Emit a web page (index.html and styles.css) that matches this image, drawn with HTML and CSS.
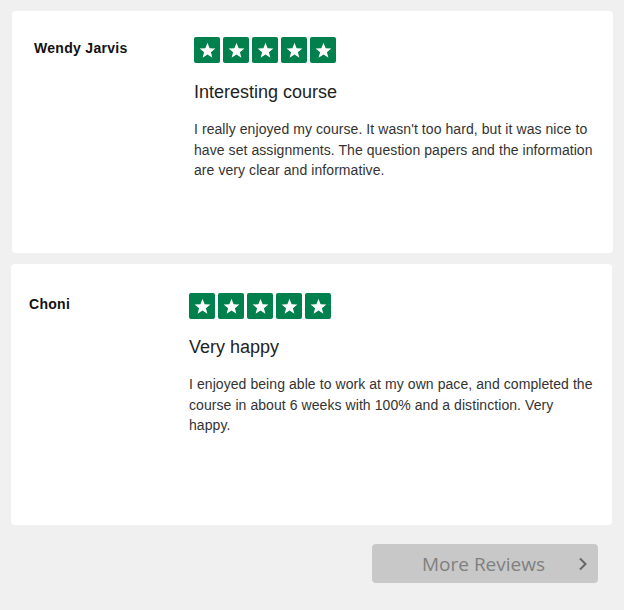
FILE: index.html
```html
<!DOCTYPE html>
<html>
<head>
<meta charset="utf-8">
<link rel="stylesheet" href="styles.css">
</head>
<body>
<div class="page">
  <div class="card card-one">
    <div class="author">Wendy Jarvis</div>
    <div class="content">
      <div class="stars">
        <span class="star"><svg viewBox="0 0 24 24"><path d="M12 3.2l2.4 6.1 6.6.4-5.1 4.2 1.7 6.4L12 16.7l-5.6 3.6 1.7-6.4L3 9.7l6.6-.4z"/></svg></span>
        <span class="star"><svg viewBox="0 0 24 24"><path d="M12 3.2l2.4 6.1 6.6.4-5.1 4.2 1.7 6.4L12 16.7l-5.6 3.6 1.7-6.4L3 9.7l6.6-.4z"/></svg></span>
        <span class="star"><svg viewBox="0 0 24 24"><path d="M12 3.2l2.4 6.1 6.6.4-5.1 4.2 1.7 6.4L12 16.7l-5.6 3.6 1.7-6.4L3 9.7l6.6-.4z"/></svg></span>
        <span class="star"><svg viewBox="0 0 24 24"><path d="M12 3.2l2.4 6.1 6.6.4-5.1 4.2 1.7 6.4L12 16.7l-5.6 3.6 1.7-6.4L3 9.7l6.6-.4z"/></svg></span>
        <span class="star"><svg viewBox="0 0 24 24"><path d="M12 3.2l2.4 6.1 6.6.4-5.1 4.2 1.7 6.4L12 16.7l-5.6 3.6 1.7-6.4L3 9.7l6.6-.4z"/></svg></span>
      </div>
      <h2 class="title">Interesting course</h2>
      <p class="body">I really enjoyed my course. It wasn't too hard, but it was nice to have set assignments. The question papers and the information are very clear and informative.</p>
    </div>
  </div>
  <div class="card card-two">
    <div class="author">Choni</div>
    <div class="content">
      <div class="stars">
        <span class="star"><svg viewBox="0 0 24 24"><path d="M12 3.2l2.4 6.1 6.6.4-5.1 4.2 1.7 6.4L12 16.7l-5.6 3.6 1.7-6.4L3 9.7l6.6-.4z"/></svg></span>
        <span class="star"><svg viewBox="0 0 24 24"><path d="M12 3.2l2.4 6.1 6.6.4-5.1 4.2 1.7 6.4L12 16.7l-5.6 3.6 1.7-6.4L3 9.7l6.6-.4z"/></svg></span>
        <span class="star"><svg viewBox="0 0 24 24"><path d="M12 3.2l2.4 6.1 6.6.4-5.1 4.2 1.7 6.4L12 16.7l-5.6 3.6 1.7-6.4L3 9.7l6.6-.4z"/></svg></span>
        <span class="star"><svg viewBox="0 0 24 24"><path d="M12 3.2l2.4 6.1 6.6.4-5.1 4.2 1.7 6.4L12 16.7l-5.6 3.6 1.7-6.4L3 9.7l6.6-.4z"/></svg></span>
        <span class="star"><svg viewBox="0 0 24 24"><path d="M12 3.2l2.4 6.1 6.6.4-5.1 4.2 1.7 6.4L12 16.7l-5.6 3.6 1.7-6.4L3 9.7l6.6-.4z"/></svg></span>
      </div>
      <h2 class="title">Very happy</h2>
      <p class="body">I enjoyed being able to work at my own pace, and completed the course in about 6 weeks with 100% and a distinction. Very happy.</p>
    </div>
  </div>
  <div class="actions">
    <button class="more">
      <span class="more-label">More Reviews</span>
      <svg class="chev" viewBox="0 0 10 14"><polyline points="2,1.5 7.5,7 2,12.5" fill="none" stroke="#666" stroke-width="2"/></svg>
    </button>
  </div>
</div>
</body>
</html>
```
FILE: styles.css
```css
html, body {
  margin: 0;
  padding: 0;
  background: #f0f0f0;
}
body {
  font-family: "Liberation Sans", Arial, sans-serif;
  color: #222;
}
.page {
  width: 624px;
  height: 610px;
  padding-top: 11px;
  box-sizing: border-box;
}
.card {
  background: #fff;
  border-radius: 4px;
  width: 601px;
  display: flex;
  box-sizing: border-box;
}
.card-one {
  margin-left: 12px;
  height: 242px;
  padding: 26px 0 0 22px;
}
.card-two {
  margin-left: 11px;
  margin-top: 11px;
  height: 261px;
  padding: 29px 0 0 18px;
}
.author {
  width: 160px;
  font-size: 14px;
  font-weight: bold;
  letter-spacing: 0.3px;
  line-height: 16px;
  color: #111;
  margin-top: 3px;
}
.content {
  width: 406px;
}
.stars {
  display: flex;
  gap: 3px;
  height: 26px;
}
.star {
  width: 26px;
  height: 26px;
  background: #00804c;
  border-radius: 2px;
  display: flex;
  align-items: center;
  justify-content: center;
}
.star svg {
  width: 21px;
  height: 21px;
  fill: #fff;
}
.title {
  margin: 18px 0 0;
  font-size: 18px;
  font-weight: normal;
  line-height: 22px;
  color: #222;
}
.card-two .title {
  margin-top: 17px;
}
.body {
  margin: 16px 0 0;
  font-size: 14px;
  letter-spacing: 0.07px;
  line-height: 20.5px;
  color: #333;
}
.actions {
  display: flex;
  padding: 19px 0 0 372px;
}
.more {
  width: 226px;
  height: 39px;
  background: #c8c8c8;
  border: none;
  border-radius: 4px;
  display: flex;
  align-items: center;
  padding: 0 10px 0 50px;
  box-sizing: border-box;
  font-family: "Open Sans", sans-serif;
  font-size: 19px;
  color: #808080;
}
.more-label {
  flex: 1;
  text-align: left;
}
.chev {
  width: 10px;
  height: 14px;
}
```
